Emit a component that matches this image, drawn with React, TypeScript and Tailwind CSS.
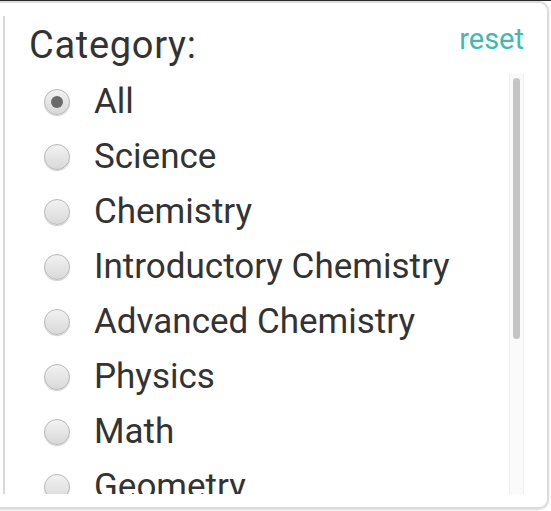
import React, { useState } from 'react';

const categories = [
  'All',
  'Science',
  'Chemistry',
  'Introductory Chemistry',
  'Advanced Chemistry',
  'Physics',
  'Math',
  'Geometry',
  'Algebra',
];

function Radio({ checked }: { checked: boolean }) {
  return (
    <span className="flex h-[26px] w-[26px] shrink-0 items-center justify-center rounded-full border border-[#b8b8b8] bg-gradient-to-b from-[#f2f2f2] to-[#d9d9d9] shadow-[0_1px_1px_rgba(0,0,0,0.2)]">
      {checked && <span className="h-[12px] w-[12px] rounded-full bg-[#6a6a6a]" />}
    </span>
  );
}

export default function App() {
  const [selected, setSelected] = useState('All');

  return (
    <div className="h-[511px] w-[551px] overflow-hidden bg-white font-['Roboto',sans-serif] text-[#333]">
      <div className="h-px bg-[#2b2b2b]" />
      {/* Filter panel */}
      <div className="-ml-4 mr-[2px] h-[508px] rounded-r-[10px] border-2 border-[#dcdcdc] pb-[13px] pt-[13px] pl-[17px] shadow-[0_1px_2px_rgba(0,0,0,0.15)]">
        <div className="flex h-full flex-col border-l-2 border-[#d9d9d9] pl-[24px] pr-[23px]">
          <div className="flex items-start justify-between pt-[7px]">
            <h3 className="text-[38px] leading-[44px] tracking-[0.7px]">Category:</h3>
            <button className="-mt-px text-[29px] leading-[34px] text-[#3bbcaf]" onClick={() => setSelected('All')}>
              reset
            </button>
          </div>

          <div className="mt-[7px] flex min-h-0 flex-1">
            <ul className="min-h-0 flex-1 overflow-hidden">
              {categories.map((c) => (
                <li key={c}>
                  <label className="flex h-[55px] cursor-pointer items-center gap-[24px] pl-[15px]" onClick={() => setSelected(c)}>
                    <Radio checked={selected === c} />
                    <span className="text-[35px] leading-none">{c}</span>
                  </label>
                </li>
              ))}
            </ul>
            {/* Scrollbar */}
            <div className="w-[15px] shrink-0 border-x border-[#efefef] bg-[#fafafa] px-[3px] pt-[4px]">
              <div className="h-[261px] rounded-full bg-[#c4c4c4]" />
            </div>
          </div>
        </div>
      </div>
    </div>
  );
}
